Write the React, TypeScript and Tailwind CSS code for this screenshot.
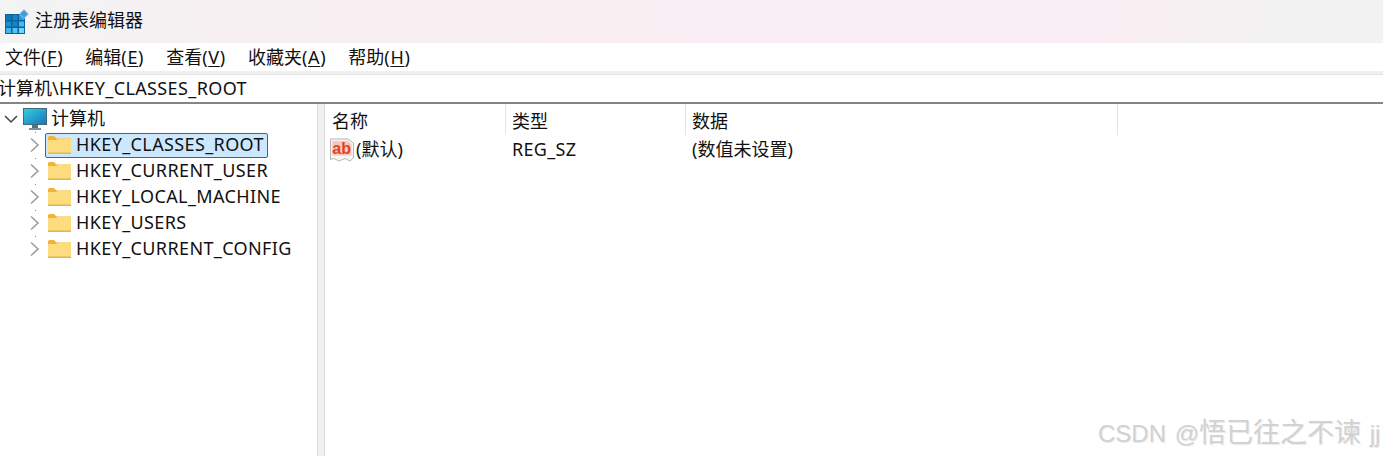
const font = "font-['Noto_Sans','Noto_Sans_CJK_SC','Liberation_Sans',sans-serif]";

const menus: [string, string][] = [
  ["文件", "F"],
  ["编辑", "E"],
  ["查看", "V"],
  ["收藏夹", "A"],
  ["帮助", "H"],
];

const hives = [
  "HKEY_CLASSES_ROOT",
  "HKEY_CURRENT_USER",
  "HKEY_LOCAL_MACHINE",
  "HKEY_USERS",
  "HKEY_CURRENT_CONFIG",
];

function RegeditIcon() {
  return (
    <svg width="24" height="25" viewBox="0 0 24 25" className="shrink-0">
      <rect x="0" y="5" width="20" height="20" fill="#0b639f" />
      <rect x="1" y="6" width="5" height="5" fill="#0f78ba" />
      <rect x="7.5" y="6" width="5" height="5" fill="#1784c6" />
      <rect x="14" y="6" width="5" height="5" fill="#2b9ad8" />
      <rect x="1" y="12.5" width="5" height="5" fill="#1a8ed2" />
      <rect x="7.5" y="12.5" width="5" height="5" fill="#1784c6" />
      <rect x="14" y="12.5" width="5" height="5" fill="#45bbf0" />
      <rect x="1" y="19" width="5" height="5" fill="#3fb5ee" />
      <rect x="7.5" y="19" width="5" height="5" fill="#4fc4f4" />
      <rect x="14" y="19" width="5" height="5" fill="#6ed4f8" />
      <path d="M19 0.5 L23.5 5 L19 9.5 L14.5 5 Z" fill="#3d9fd8" stroke="#a9cfe6" />
    </svg>
  );
}

function FolderIcon() {
  return (
    <svg width="23" height="18" viewBox="0 0 23 18" className="shrink-0">
      <path d="M0 1.5 Q0 0 1.5 0 H6 L8.5 2.5 H23 V6 H0 Z" fill="#f2b233" />
      <path d="M0 4 H8.5 L10.5 2.5 H23 V17.5 H0 Z" fill="#fcdc7e" />
      <path d="M0 16.5 H23 V18 H0 Z" fill="#e9b54a" />
    </svg>
  );
}

function MonitorIcon() {
  return (
    <svg width="24" height="23" viewBox="0 0 24 23" className="shrink-0">
      <defs>
        <linearGradient id="screen" x1="0" y1="0" x2="1" y2="1">
          <stop offset="0" stopColor="#35d0e4" />
          <stop offset="1" stopColor="#1773b8" />
        </linearGradient>
      </defs>
      <rect x="0.5" y="0.5" width="23" height="16" fill="url(#screen)" stroke="#46687c" />
      <rect x="9" y="17" width="6" height="3" fill="#55727f" />
      <rect x="6" y="20" width="12" height="2" fill="#7c929e" />
    </svg>
  );
}

function Chevron({ open }: { open?: boolean }) {
  return (
    <svg width="14" height="16" viewBox="0 0 14 16" className="shrink-0">
      {open ? (
        <path d="M1 5 L7 11 L13 5" fill="none" stroke="#444" strokeWidth="1.5" />
      ) : (
        <path d="M3 1.5 L10 8 L3 14.5" fill="none" stroke="#9c9c9c" strokeWidth="1.6" />
      )}
    </svg>
  );
}

function StringIcon() {
  return (
    <svg width="24" height="24" viewBox="0 0 24 24" className="shrink-0">
      <path d="M0.5 1 H18 L23.5 5 V20 L20 23 L15 20.5 L9 23 L4 20.5 L0.5 21.5 Z" fill="#f6f6f6" stroke="#b5b5b5" />
      <path d="M2 3 H18 L21.5 6 V17.5 H2 Z" fill="#f7c9bb" />
      <text x="11.7" y="15.5" textAnchor="middle" fontSize="16" fontWeight="700" fill="#dd4426" fontFamily="Liberation Sans, sans-serif">
        ab
      </text>
    </svg>
  );
}

export default function App() {
  return (
    <div className={`${font} relative w-[1383px] h-[456px] flex flex-col overflow-hidden bg-white text-[18px] text-[#111]`}>
      <div className="h-[43px] shrink-0 flex items-center pl-[5px] gap-[6px] bg-[linear-gradient(90deg,#f3f3f3_0%,#f7f0f2_20%,#f9eef3_50%,#f9eef3_80%,#f3f2f2_92%,#f2f2f2_100%)]">
        <RegeditIcon />
        <span className="leading-none mb-[3px]">注册表编辑器</span>
      </div>

      <div className="h-[28px] shrink-0 flex items-center pl-[5px] gap-[22px]">
        {menus.map(([label, key]) => (
          <span key={key} className="leading-none whitespace-nowrap mb-[1px]">
            {label}
            <span className="tracking-[0.7px]">
              (<span className="underline underline-offset-2">{key}</span>)
            </span>
          </span>
        ))}
      </div>

      <div className="h-[4px] shrink-0 bg-[#f0f0f0] border-b border-[#e4e4e4]" />

      <div className="h-[27px] shrink-0 flex items-center border-b-2 border-[#858585] box-content">
        <span className="leading-none whitespace-nowrap ml-[-2px] mb-[2px]">
          计算机<span className="tracking-[0.38px]">\HKEY_CLASSES_ROOT</span>
        </span>
      </div>

      <div className="flex-1 flex min-h-0">
        <div className="w-[317px] shrink-0 pt-[2px]">
          <div className="h-[26px] flex items-center pl-[4px]">
            <Chevron open />
            <span className="ml-[5px]">
              <MonitorIcon />
            </span>
            <span className="ml-[4px] leading-none mb-[2px]">计算机</span>
          </div>
          {hives.map((name, i) => (
            <div key={name} className="relative h-[26px] flex items-center pl-[28px]">
              <span className="absolute left-[35px] top-[0px] w-px h-px bg-[#888]" />
              <Chevron />
              <div
                className={
                  i === 0
                    ? "ml-[3px] h-[25px] flex items-center pl-[2px] pr-[3px] bg-[#cce8ff] border border-[#0078d7] rounded-[2px]"
                    : "ml-[3px] h-[25px] flex items-center pl-[2px] pr-[3px] border border-transparent"
                }
              >
                <FolderIcon />
                <span className="ml-[5px] leading-none whitespace-nowrap mb-[2px] tracking-[0.38px]">{name}</span>
              </div>
            </div>
          ))}
        </div>

        <div className="w-[8px] shrink-0 bg-[#f0f0f0] border-x border-[#dcdcdc]" />

        <div className="flex-1 min-w-0">
          <div className="h-[31px] flex items-center">
            <div className="w-[181px] h-full flex items-center pl-[7px] pt-[3px] border-r border-[#e5e5e5]">名称</div>
            <div className="w-[180px] h-full flex items-center pl-[6px] pt-[3px] border-r border-[#e5e5e5]">类型</div>
            <div className="w-[432px] h-full flex items-center pl-[6px] pt-[3px] border-r border-[#e5e5e5]">数据</div>
          </div>
          <div className="h-[29px] flex items-center">
            <div className="w-[181px] flex items-center pl-[5px]">
              <StringIcon />
              <span className="ml-[2px] leading-none mb-[2px]">(默认)</span>
            </div>
            <div className="w-[180px] pl-[6px] leading-none mb-[2px] tracking-[0.3px]">REG_SZ</div>
            <div className="pl-[6px] leading-none mb-[2px]">(数值未设置)</div>
          </div>
        </div>
      </div>

      <div className="absolute left-[1098px] top-[417px] text-[24px] leading-[32px] whitespace-nowrap text-[#d2d2d2] [text-shadow:1px_1px_0_#ececec] [word-spacing:2px] font-['Liberation_Sans','Noto_Sans_CJK_SC',sans-serif]">
        CSDN @<span className="text-[27px]">悟已往之不谏</span> jj
      </div>
    </div>
  );
}
